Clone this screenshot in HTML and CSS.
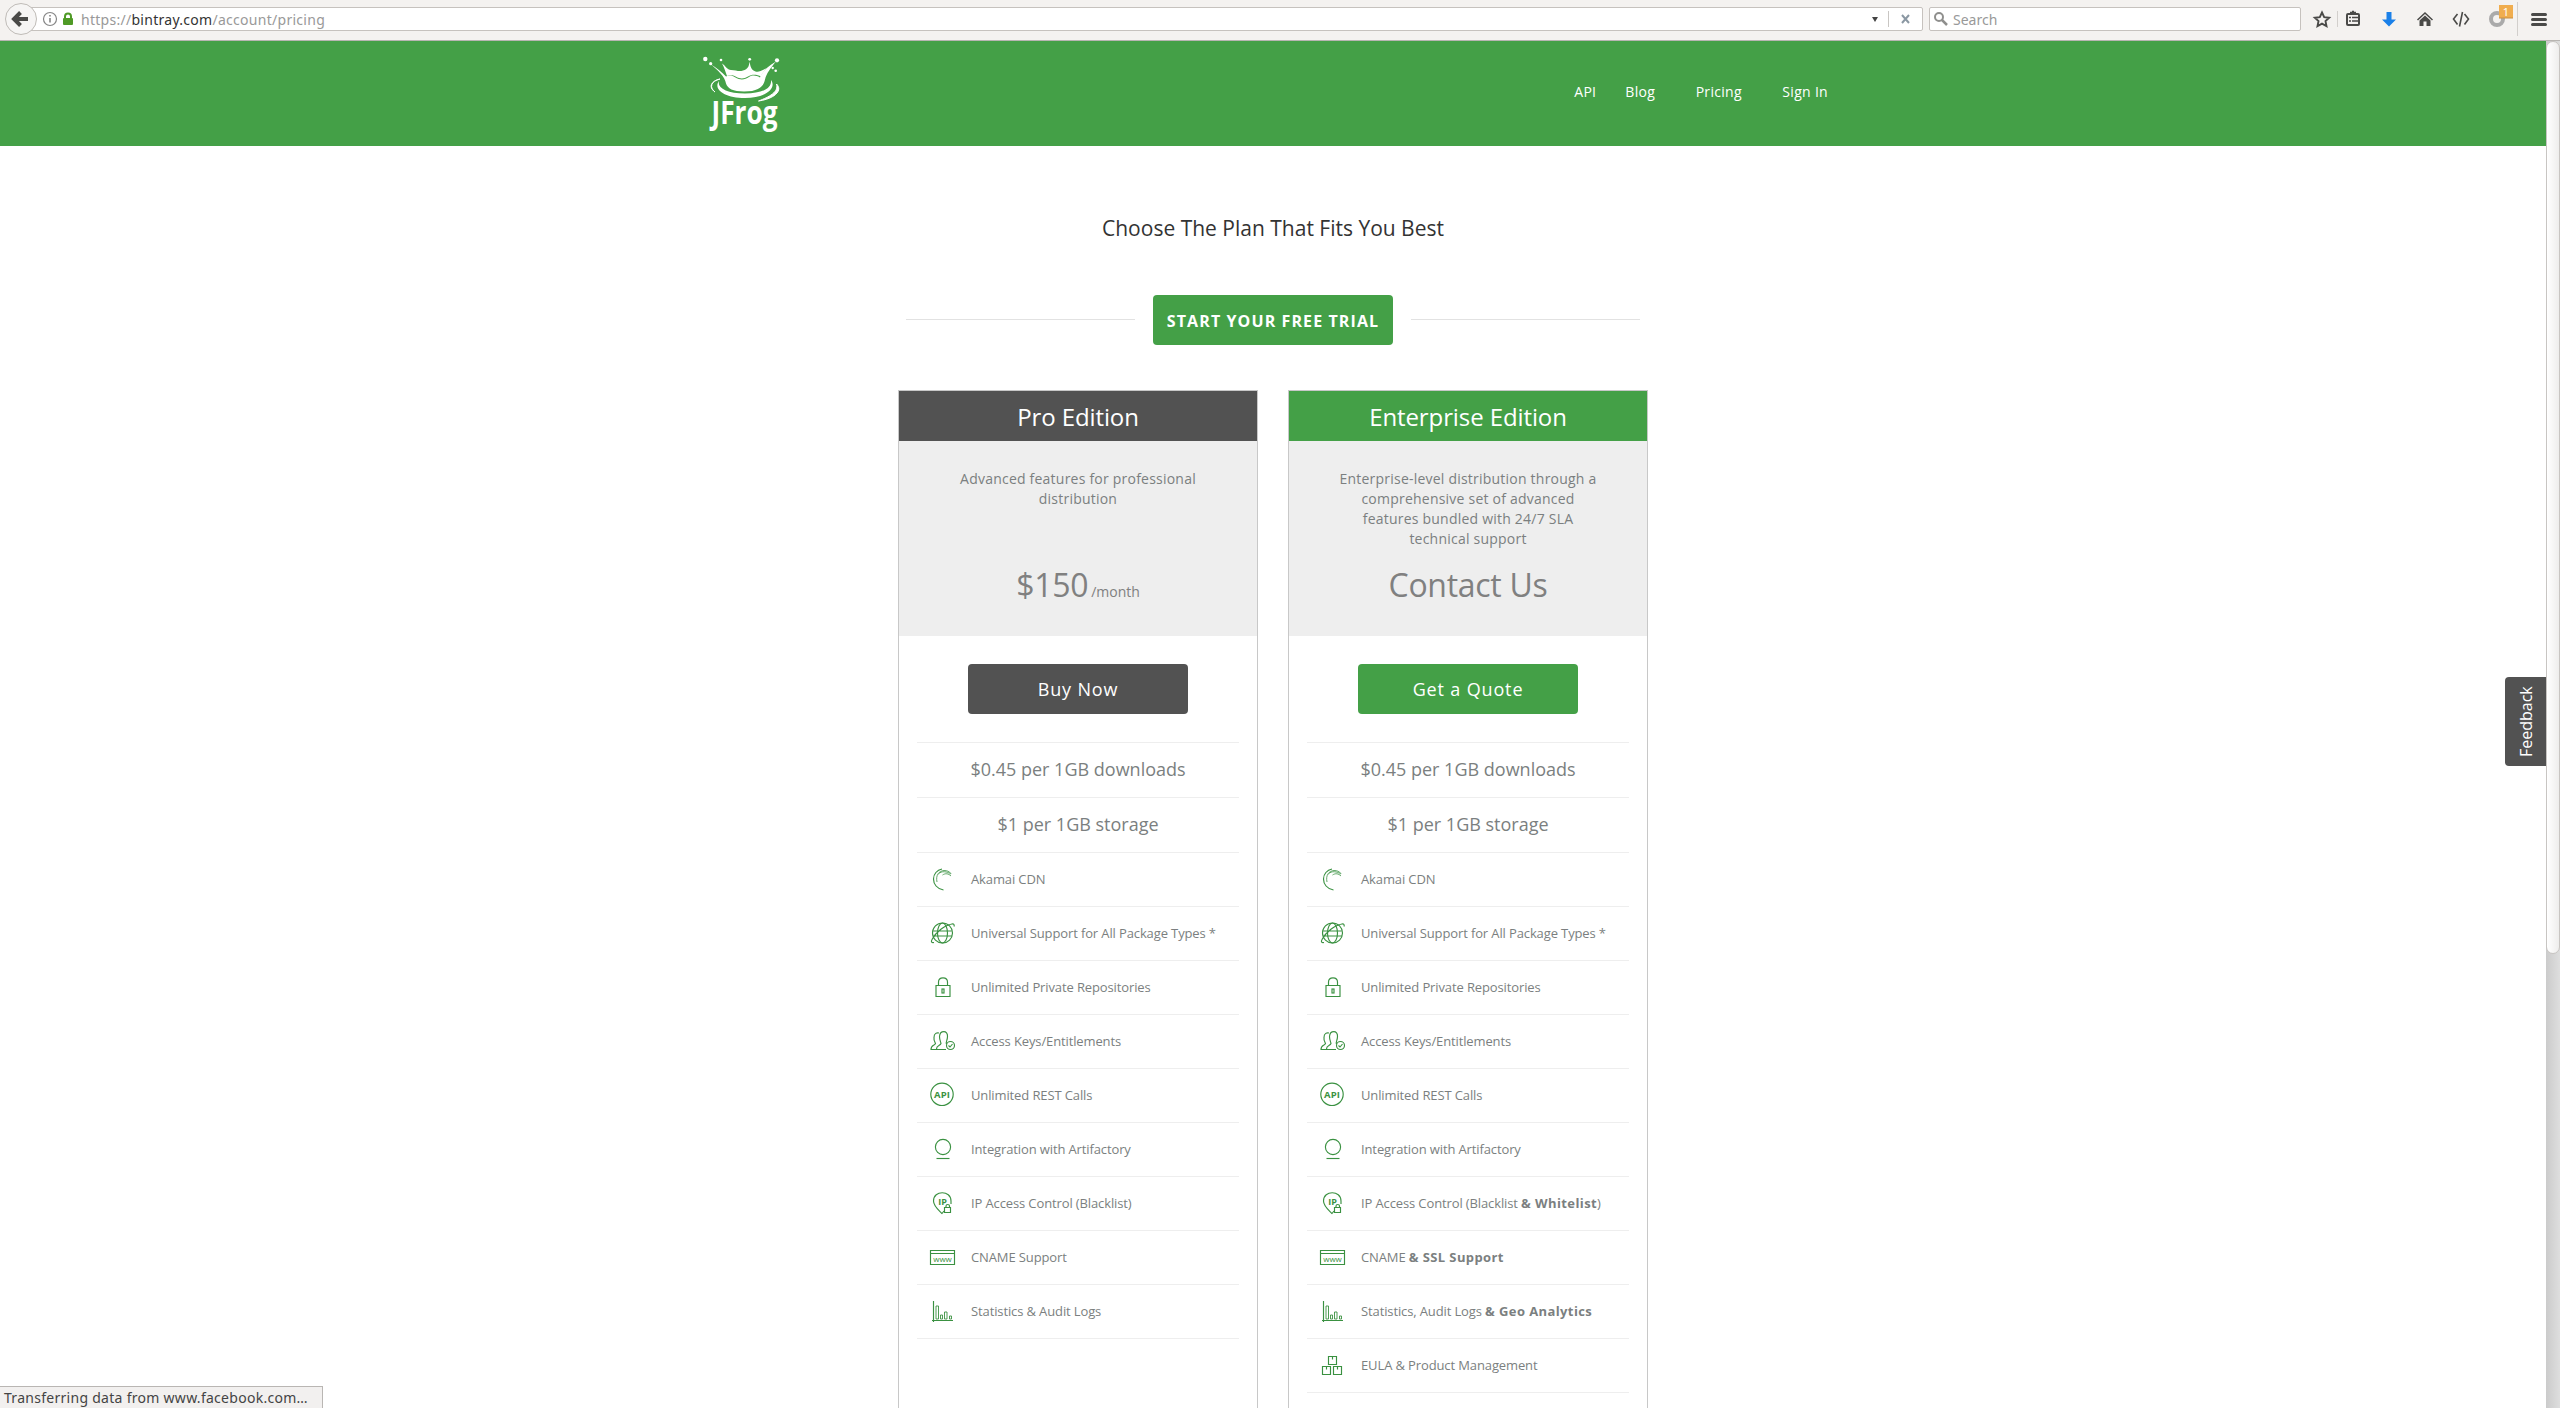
FILE: index.html
```html
<!DOCTYPE html>
<html lang="en">
<head>
<meta charset="utf-8">
<title>Bintray Pricing</title>
<link rel="stylesheet" href="styles.css">
</head>
<body>
<svg class="defs" width="0" height="0">
  <defs>
    <symbol id="akamai" viewBox="0 0 28 28"><path d="M14.500 25C8 24 4.500 19 4.500 14 4.500 9 8 5 13 4" /><path d="M8 17C6.500 10 10 6 15 5.500c3 0 5.500 1 7 3M13.500 10c3-2 6-1.500 8.500 1M9.500 9c3-3.500 8.500-2.500 12.500 0" stroke-width=".8"/></symbol>
    <symbol id="globe" viewBox="0 0 28 28"><circle cx="13.500" cy="14" r="10"/><ellipse cx="13.500" cy="14" rx="5" ry="10"/><path d="M4.500 12h18M4 17h19M3 20.500C7 13 16 6 23 5c2-.3 2.500.8 2 2.500M5 23.500c-2 .5-3.500-.5-2-3"/></symbol>
    <symbol id="lock" viewBox="0 0 28 28"><path d="M7 12.500h14v11H7zM9.500 12.500V9c0-5.500 9-5.500 9 0v3.500"/><rect x="13" y="16" width="2" height="4"/></symbol>
    <symbol id="users" viewBox="0 0 28 28"><path d="M17 22.500H2c0-5 3.500-3.500 4.500-6 0-1-2-2-1.500-6C5 6 8 5.500 10 6M7.500 22c0-4 3.500-3 4.500-5.500 0-1-1.500-3-1.500-7C11 3 19 3 18.500 9.500c0 4-2 5-1 7.500"/><circle cx="21.500" cy="18.500" r="4"/><path d="M19.500 18.500l1.500 1.500 2.500-3"/></symbol>
    <symbol id="api" viewBox="0 0 28 28"><circle cx="13" cy="13.300" r="11.200"/><text x="13" y="16.800" font-size="9.500" textLength="16">API</text></symbol>
    <symbol id="artifactory" viewBox="0 0 28 28"><circle cx="14" cy="12" r="7.600"/><path d="M7.500 23.500h13"/></symbol>
    <symbol id="ip" viewBox="0 0 28 28"><path d="M15 22l-2 2.500c-4-4-8.500-7.500-8.500-12.500C4.500 1 22 1 22 12v3"/><text x="13.500" y="16" font-size="9">IP</text><path d="M15.500 18.500h6v5h-6zM17 18.500v-1.500c0-2 3.500-2 3.500 0v1.500"/></symbol>
    <symbol id="www" viewBox="0 0 28 28"><path d="M1.500 7.500h24v14h-24zM1.500 10.500h24"/><text x="13.500" y="18.500" class="thin" font-size="8">www</text></symbol>
    <symbol id="stats" viewBox="0 0 28 28"><path d="M4.500 4v21M3 23.500h21"/><path stroke-width=".9" d="M7 9h2.500v13H7zM11.500 18h2v4h-2zM15.500 15H18v7h-2.500zM20.500 19h2v3h-2z"/></symbol>
    <symbol id="boxes" viewBox="0 0 28 28"><path d="M9.500 5.500h8v8h-8zM3.500 15.500h8v8h-8zM14.500 15.500h8v8h-8zM13.500 5.500v3M7.500 15.500v3M18.500 15.500v3"/></symbol>
  </defs>
</svg>

<div class="toolbar">
  <div class="urlbar">
    <svg class="back" width="32" height="32" viewBox="0 0 32 32"><circle cx="16" cy="16" r="15.500" fill="#f6f5f4" stroke="#bfbbb7"/><path d="M15.500 9.500L9 16l6.500 6.500M10 16h13" fill="none" stroke="#4a4a48" stroke-width="4"/></svg>
    <svg class="info" width="16" height="16" viewBox="0 0 16 16"><circle cx="8" cy="8" r="6.500" fill="none" stroke="#858585" stroke-width="1.200"/><path d="M8 7v4.500M8 4v1.600" stroke="#858585" stroke-width="1.600"/></svg>
    <svg class="padlock" width="12" height="14" viewBox="0 0 12 14"><path d="M3 7V4.500c0-4 6-4 6 0V7" fill="none" stroke="#4f9a26" stroke-width="2"/><rect x="1" y="6" width="10" height="7" rx="1" fill="#4f9a26"/></svg>
    <span class="url">https://<b>bintray.com</b>/account/pricing</span>
    <span class="caret"></span>
    <svg class="stop" width="34" height="24" viewBox="0 0 34 24"><path d="M.5 4v16" stroke="#c9c6c3"/><path d="M14 8l7 8M21 8l-7 8" stroke="#8b98a3" stroke-width="2"/></svg>
  </div>
  <div class="search">
    <svg width="16" height="16" viewBox="0 0 16 16"><circle cx="6" cy="6" r="4" fill="none" stroke="#8f8f8d" stroke-width="2"/><path d="M9 9l5 5" stroke="#8f8f8d" stroke-width="2.500"/></svg>
    <span>Search</span>
  </div>
  <svg class="tools" width="259" height="40" viewBox="2301 0 259 40">
    <path d="M2322 12.500l2.200 4.600 5 .6-3.700 3.400 1 5-4.500-2.500-4.500 2.500 1-5-3.700-3.400 5-.6z" fill="none" stroke="#4a4a48" stroke-width="1.900"/>
    <path d="M2337.500 11v16M2517.500 2v34" stroke="#d2cfcc"/>
    <rect x="2347" y="14" width="12" height="11" rx="1" fill="none" stroke="#4a4a48" stroke-width="2"/><path d="M2350 12.500h6M2352 11.500h2M2349 17.500h2M2352 17.500h6M2349 21h2M2352 21h6" stroke="#4a4a48" stroke-width="1.500"/>
    <path d="M2386.500 12h5v7.500h4.500l-7 7-7-7h4.500z" fill="#1a80e8"/>
    <path d="M2417.500 20l7.500-7 7.500 7" fill="none" stroke="#4a4a48" stroke-width="1.500"/><path d="M2419.500 20.500l5.500-5 5.500 5V26h-4v-4.500h-3V26h-4z" fill="#4a4a48"/>
    <path d="M2457.500 14l-4 5 4 5.500M2464.500 14l4 5-4 5.500M2462.500 12l-3 14.500" fill="none" stroke="#4a4a48" stroke-width="1.600"/>
    <circle cx="2497" cy="19" r="6" fill="none" stroke="#aaa" stroke-width="4"/>
    <rect x="2499" y="5" width="14" height="13" fill="#f0ad4e"/><path d="M2499 18h14" stroke="#c98f43"/><text x="2506" y="15.500" class="count">1</text>
    <path d="M2532.500 14.500h13M2532.500 19.500h13M2532.500 24.500h13" stroke="#4a4a48" stroke-width="3" stroke-linecap="round"/>
  </svg>
</div>

<div class="viewport">
  <div class="page">
    <header class="header">
      <svg class="logo" width="82" height="80" viewBox="0 0 82 80">
        <g fill="#fff">
          <circle cx="3.300" cy="3" r="2.200"/><circle cx="8.700" cy="7.700" r="1.600"/><circle cx="19" cy="4" r="1.300"/><circle cx="47.700" cy="3.300" r="1.400"/><circle cx="75" cy="4.300" r="2.100"/><circle cx="70.700" cy="12" r="1.200"/><circle cx="73.700" cy="14.700" r="1.300"/>
          <path d="M9 8.500c5 3 11 7.500 15 12 3-1.500 6-1.500 9 .8 6 3.500 10 2.200 14-.3 4-2.300 7-1.500 11 .5C60 16 65 11 74 5.500c-6 7-9.500 12-11 18-1.500 7-6 12-21 12-11 0-16.500-3-18-8C23 21 16 14 9 8.500z"/>
          <path d="M20 7.500c4 2.500 5 6.500 9 6.500 5 0 8 2 12 .5 5-1.500 6-4 6.500-9 1 5 1.500 8.500 6 10 4 1 7-1.500 11.500-3.500-3 3-5 5.500-6 8.500-4-2-9-2.500-13 0-4 2.500-8 2.500-12 .2-3.500-2-6.500-1.700-9-.7-1.500-4-3-9-5-12.500z"/>
          <path d="M17 25c-2 7 8 12.500 26 12.500S70 32 69 24c6 8-5 18-26 18S11 33 17 25z"/>
          <path d="M18 23c-9 2-12 8-5 13C7 31.500 9 25 18 23z" stroke="#fff"/>
          <path d="M74.500 28c7 7-3 15-18 17C67 41 77 36 74.500 28z" stroke="#fff"/>
        </g>
        <text x="42.500" y="68" class="wordmark" textLength="66" lengthAdjust="spacingAndGlyphs">JFrog</text>
      </svg>
      <nav class="nav"><a class="n1">API</a><a class="n2">Blog</a><a class="n3">Pricing</a><a>Sign In</a></nav>
    </header>
    <main class="main">
      <h1>Choose The Plan That Fits You Best</h1>
      <div class="trial"><i></i><a>START YOUR FREE TRIAL</a><i></i></div>
      <div class="plans">
        <section class="plan pro">
          <h2>Pro Edition</h2>
          <div class="intro"><p>Advanced features for professional distribution</p><div class="price">$150 <small>/month</small></div></div>
          <div class="action"><a>Buy Now</a></div>
          <ul>
            <li class="rate">$0.45 per 1GB downloads</li>
            <li class="rate">$1 per 1GB storage</li>
            <li><svg><use href="#akamai"/></svg>Akamai CDN</li>
            <li><svg><use href="#globe"/></svg>Universal Support for All Package Types *</li>
            <li><svg><use href="#lock"/></svg>Unlimited Private Repositories</li>
            <li><svg><use href="#users"/></svg>Access Keys/Entitlements</li>
            <li><svg><use href="#api"/></svg>Unlimited REST Calls</li>
            <li><svg><use href="#artifactory"/></svg>Integration with Artifactory</li>
            <li><svg><use href="#ip"/></svg>IP Access Control (Blacklist)</li>
            <li><svg><use href="#www"/></svg>CNAME Support</li>
            <li><svg><use href="#stats"/></svg>Statistics &amp; Audit Logs</li>
          </ul>
        </section>
        <section class="plan enterprise">
          <h2>Enterprise Edition</h2>
          <div class="intro"><p>Enterprise-level distribution through a comprehensive set of advanced features bundled with 24/7 SLA technical support</p><div class="price">Contact Us</div></div>
          <div class="action"><a>Get a Quote</a></div>
          <ul>
            <li class="rate">$0.45 per 1GB downloads</li>
            <li class="rate">$1 per 1GB storage</li>
            <li><svg><use href="#akamai"/></svg>Akamai CDN</li>
            <li><svg><use href="#globe"/></svg>Universal Support for All Package Types *</li>
            <li><svg><use href="#lock"/></svg>Unlimited Private Repositories</li>
            <li><svg><use href="#users"/></svg>Access Keys/Entitlements</li>
            <li><svg><use href="#api"/></svg>Unlimited REST Calls</li>
            <li><svg><use href="#artifactory"/></svg>Integration with Artifactory</li>
            <li><svg><use href="#ip"/></svg><span>IP Access Control (Blacklist <b>&amp; Whitelist</b>)</span></li>
            <li><svg><use href="#www"/></svg><span>CNAME <b>&amp; SSL Support</b></span></li>
            <li><svg><use href="#stats"/></svg><span>Statistics, Audit Logs <b>&amp; Geo Analytics</b></span></li>
            <li><svg><use href="#boxes"/></svg>EULA &amp; Product Management</li>
          </ul>
        </section>
      </div>
    </main>
    <div class="feedback">Feedback</div>
    <div class="status">Transferring data from www.facebook.com…</div>
  </div>
  <div class="scrollbar"><div class="thumb"></div></div>
</div>
</body>
</html>
```
FILE: styles.css
```css
* { box-sizing: border-box; }
body { margin: 0; width: 2560px; height: 1408px; overflow: hidden; background: #fff; font-family: "Open Sans", sans-serif; color: #7b7f80; display: flex; flex-direction: column; }
.defs { position: absolute; }

.toolbar { height: 41px; flex: none; display: flex; background: #f4f2f0; border-bottom: 1px solid #b8b5b2; font-family: "Noto Sans", sans-serif; }
.urlbar { margin: 7px 0 0 21px; width: 1902px; height: 24px; display: flex; align-items: center; background: #fff; border: 1px solid #c6c2be; border-radius: 2px; }
.back { flex: none; margin-left: -17px; }
.info { margin-left: 5px; }
.padlock { margin-left: 4px; }
.url { margin-left: 7px; padding-top: 1px; font-size: 14px; letter-spacing: 0.28px; color: #999; line-height: 21px; }
.url b { font-weight: 400; color: #333; }
.caret { margin-left: auto; margin-right: 10px; border: 3px solid transparent; border-top: 5px solid #444; border-bottom: 0; }
.search { margin: 7px 0 0 6px; width: 372px; height: 24px; display: flex; align-items: center; background: #fff; border: 1px solid #c6c2be; border-radius: 2px; font-size: 14px; color: #999; }
.search svg { margin: 0 4px 0 3px; }
.search span { padding-top: 1px; }
.count { font: 11px "Noto Sans", sans-serif; fill: #fff; text-anchor: middle; }

.viewport { flex: 1; min-height: 0; display: flex; }
.page { width: 2546px; position: relative; overflow: hidden; }
.header { height: 105px; background: #44a047; display: flex; justify-content: space-between; padding: 15px 718px 0 702px; }
.logo { overflow: visible; }
.logo .wordmark { font: 700 32px "Open Sans", sans-serif; fill: #fff; text-anchor: middle; }
.nav { display: flex; padding-top: 26px; font-size: 14px; letter-spacing: 0.3px; line-height: 20px; color: #fff; }
.n1 { margin-right: 29px; }
.n2, .n3 { margin-right: 40.5px; }

.main { width: 750px; margin: 0 auto; }
h1 { margin: 66px 0 0; font-size: 21px; line-height: 32px; font-weight: 400; color: #333; text-align: center; }
.trial { margin: 51px 8px 45px; display: flex; align-items: center; gap: 18px; }
.trial i { flex: 1; height: 1px; margin-bottom: 2px; background: #e2e2e2; }
.trial a { width: 240px; height: 50px; border-radius: 4px; background: #44a047; color: #fff; font-size: 16px; font-weight: 700; letter-spacing: 1.1px; line-height: 52px; text-align: center; }
.plans { display: flex; gap: 30px; }
.plan { width: 360px; height: 1060px; border: 1px solid #c8c8c8; }
h2 { margin: 0; height: 50px; color: #fff; font-size: 24px; letter-spacing: -0.1px; line-height: 52px; font-weight: 400; text-align: center; }
.pro h2, .pro .action a { background: #525252; }
.enterprise h2, .enterprise .action a { background: #44a047; }
.intro { height: 195px; background: #eee; padding: 28px 46px 0; text-align: center; }
.intro p { margin: 0; height: 90px; font-size: 14px; line-height: 20px; letter-spacing: 0.22px; }
.price { font-size: 32px; line-height: 52px; letter-spacing: -0.3px; color: #808080; white-space: nowrap; }
.price small { font-size: 14px; letter-spacing: 0; margin-left: -5px; }
.action { height: 106px; padding-top: 28px; }
.action a { display: block; width: 220px; height: 50px; margin: 0 auto; border-radius: 4px; color: #fff; font-size: 18px; letter-spacing: 0.85px; line-height: 50px; text-align: center; }
ul { list-style: none; margin: 0 18px; padding: 0; border-top: 1px solid #eee; }
li { height: 54px; padding-bottom: 2px; display: flex; align-items: center; border-bottom: 1px solid #eee; font-size: 13px; letter-spacing: -0.12px; white-space: nowrap; }
li svg { width: 28px; height: 28px; margin: 0 14px 0 12px; fill: none; stroke: #3a9141; stroke-width: 1.15; }
li svg text, symbol text { font-family: "Open Sans", sans-serif; font-weight: 700; fill: #3a9141; stroke: none; letter-spacing: 0; text-anchor: middle; }
li svg .thin, symbol .thin { font-weight: 400; }
li b { font-weight: 700; letter-spacing: 0.4px; }
.rate { height: 55px; justify-content: center; font-size: 18px; letter-spacing: 0; }

.feedback { position: absolute; right: 0; top: 636px; width: 41px; height: 89px; padding-right: 0; background: #525252; border-radius: 0 4px 4px 0; color: #fff; font-size: 16px; line-height: 43px; text-align: center; writing-mode: vertical-rl; transform: rotate(180deg); }
.status { position: absolute; left: 0; bottom: 0; width: 323px; height: 22px; padding-left: 4px; background: #f2f0ef; border: 1px solid #b9b6b3; border-left: 0; border-bottom: 0; font: 14px/22px "Noto Sans", sans-serif; letter-spacing: 0.28px; color: #444; white-space: nowrap; }
.scrollbar { width: 14px; background: linear-gradient(90deg, #cbcbcb, #dedede); }
.thumb { height: 913px; border: 1px solid #c8c5c2; border-radius: 7px; background: linear-gradient(90deg, #fff, #eeedec); }
```
